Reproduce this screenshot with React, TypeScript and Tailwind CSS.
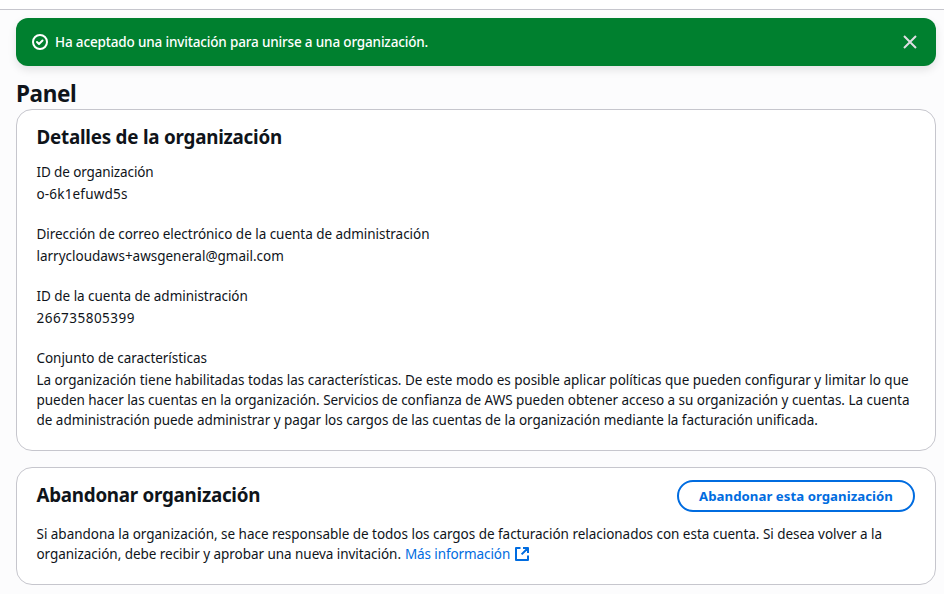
type Line = { text: string; tracking: string };
type Field = { label: Line; value: Line[] };

const fields: Field[] = [
  {
    label: { text: "ID de organización", tracking: "tracking-[-0.11px]" },
    value: [{ text: "o-6k1efuwd5s", tracking: "tracking-[0.18px]" }],
  },
  {
    label: {
      text: "Dirección de correo electrónico de la cuenta de administración",
      tracking: "tracking-[-0.035px]",
    },
    value: [{ text: "larrycloudaws+awsgeneral@gmail.com", tracking: "tracking-[-0.01px]" }],
  },
  {
    label: { text: "ID de la cuenta de administración", tracking: "tracking-[-0.04px]" },
    value: [{ text: "266735805399", tracking: "tracking-[0.48px]" }],
  },
  {
    label: { text: "Conjunto de características", tracking: "tracking-[-0.04px]" },
    value: [
      {
        text: "La organización tiene habilitadas todas las características. De este modo es posible aplicar políticas que pueden configurar y limitar lo que",
        tracking: "tracking-[-0.011px]",
      },
      {
        text: "pueden hacer las cuentas en la organización. Servicios de confianza de AWS pueden obtener acceso a su organización y cuentas. La cuenta",
        tracking: "tracking-[-0.035px]",
      },
      {
        text: "de administración puede administrar y pagar los cargos de las cuentas de la organización mediante la facturación unificada.",
        tracking: "tracking-[-0.03px]",
      },
    ],
  },
];

function CheckIcon() {
  return (
    <svg className="size-4 shrink-0" viewBox="0 0 16 16" fill="none" stroke="currentColor" strokeWidth="2">
      <circle cx="8" cy="8" r="7" />
      <path d="m5 8 2 2 3.521-3.521" strokeLinecap="round" strokeLinejoin="round" />
    </svg>
  );
}

function CloseIcon() {
  return (
    <svg className="size-4" viewBox="0 0 16 16" fill="none" stroke="currentColor" strokeWidth="2">
      <path d="m2 2 12 12M14 2 2 14" strokeLinejoin="round" />
    </svg>
  );
}

function ExternalIcon() {
  return (
    <svg className="size-4" viewBox="0 0 16 16" fill="none" stroke="currentColor" strokeWidth="2">
      <path d="M9 2h5v5M7.6 8.4 14 2M14 9.5V14H2V2h4.5" strokeLinejoin="round" />
    </svg>
  );
}

export default function App() {
  return (
    <div className="flex h-[594px] w-[944px] flex-col overflow-hidden bg-[#fcfcfd] font-['Noto_Sans',sans-serif] text-[13.5px] leading-5 whitespace-nowrap text-[#0f141a]">
      <div className="h-2.5 shrink-0 border-b border-[#c6c6cd] bg-white" />
      <main className="flex flex-col pt-2 pr-2 pl-4">
        <div className="flex h-12 items-center gap-[7px] rounded-xl bg-[#00802f] px-4 text-white shadow-[0_4px_8px_rgba(0,7,22,0.1)]">
          <CheckIcon />
          <span className="grow font-medium tracking-[-0.16px]">
            Ha aceptado una invitación para unirse a una organización.
          </span>
          <button className="mr-0.5 text-[#dedee3]" aria-label="Cerrar">
            <CloseIcon />
          </button>
        </div>

        <h1 className="mt-3 h-[31px] text-[22.5px] leading-[31px] font-bold tracking-[-0.38px]">Panel</h1>

        <section className="h-[342px] rounded-2xl border border-[#c6c6cd] bg-white pt-[15px] pr-5 pl-[19.5px]">
          <h2 className="text-[18.8px] leading-6 font-bold tracking-[-0.22px]">Detalles de la organización</h2>
          <dl className="mt-[13px] flex flex-col gap-5">
            {fields.map((f) => (
              <div key={f.label.text} className="flex flex-col gap-0.5">
                <dt className={f.label.tracking}>{f.label.text}</dt>
                <dd>
                  {f.value.map((l) => (
                    <div key={l.text} className={l.tracking}>
                      {l.text}
                    </div>
                  ))}
                </dd>
              </div>
            ))}
          </dl>
        </section>

        <section className="mt-4 h-[118px] rounded-2xl border border-[#c6c6cd] bg-white pt-3 pr-5 pl-[19.5px]">
          <div className="flex h-8 items-center justify-between">
            <h2 className="pb-0.5 text-[18.8px] leading-6 font-bold tracking-[-0.26px]">Abandonar organización</h2>
            <button className="h-8 w-[238px] rounded-full border-2 border-[#006ce0] text-[13.2px] font-bold tracking-[0.05px] text-[#006ce0]">
              Abandonar esta organización
            </button>
          </div>
          <p className="mt-3 tracking-[-0.03px]">
            Si abandona la organización, se hace responsable de todos los cargos de facturación relacionados con esta
            cuenta. Si desea volver a la
          </p>
          <p className="flex items-center gap-1">
            <span className="tracking-[-0.045px]">organización, debe recibir y aprobar una nueva invitación.</span>
            <a className="flex items-center gap-[3.5px] tracking-[-0.1px] text-[#006ce0]">
              Más información
              <ExternalIcon />
            </a>
          </p>
        </section>
      </main>
    </div>
  );
}
